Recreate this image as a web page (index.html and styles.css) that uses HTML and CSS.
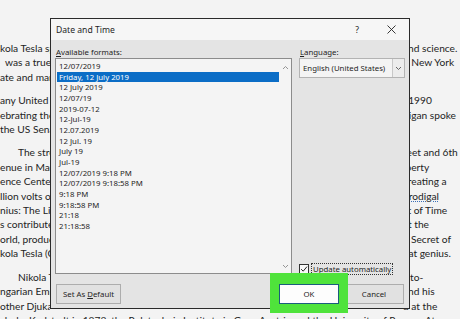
FILE: index.html
```html
<!DOCTYPE html>
<html lang="en">
<head>
  <meta charset="UTF-8">
  <meta name="viewport" content="width=device-width, initial-scale=1.0">
  <title>Date and Time</title>
  <link rel="stylesheet" href="styles.css">
</head>
<body>
  <div class="document">
    <div class="para">
      <div class="line"><span class="l">kola Tesla spent</span><span class="r">and science.</span></div>
      <div class="line"><span class="l">&nbsp;&nbsp;was a true</span><span class="r">n New York</span></div>
      <div class="line"><span class="l">ate and manu</span><span class="r"></span></div>
    </div>
    <div class="para">
      <div class="line"><span class="l">any United St</span><span class="r">&nbsp;&nbsp;1990</span></div>
      <div class="line"><span class="l">ebrating the</span><span class="r">higan spoke</span></div>
      <div class="line"><span class="l">the US Senate</span><span class="r"></span></div>
    </div>
    <div class="para">
      <div class="line"><span class="l indent">The street</span><span class="r">reet and 6th</span></div>
      <div class="line"><span class="l">enue in Man</span><span class="r">iberty</span></div>
      <div class="line"><span class="l">ence Center</span><span class="r">creating a</span></div>
      <div class="line"><span class="l">llion volts of</span><span class="r"><span class="squiggle">prodigal</span></span></div>
      <div class="line"><span class="l">nius: The Life</span><span class="r">st of Time</span></div>
      <div class="line"><span class="l">s contributed</span><span class="r">at the</span></div>
      <div class="line"><span class="l">orld, producing</span><span class="r">e Secret of</span></div>
      <div class="line"><span class="l">kola Tesla (C</span><span class="r">eat genius.</span></div>
    </div>
    <div class="para">
      <div class="line"><span class="l indent">Nikola Tesla</span><span class="r">s to-</span></div>
      <div class="line"><span class="l">ngarian Empire</span><span class="r">and his</span></div>
      <div class="line"><span class="l">other Djuka</span><span class="r">d at the</span></div>
      <div class="line">chule, Karlstadt in 1873, the Polytechnic Institute in Graz, Austria and the University of Prague. At</div>
    </div>
  </div>

  <div class="dialog">
    <div class="dialog-title">
      <span>Date and Time</span>
      <div class="title-buttons">
        <span class="help">?</span>
        <svg class="close" width="9" height="9" viewBox="0 0 9 9"><path d="M0.5 0.5 L8.5 8.5 M8.5 0.5 L0.5 8.5" stroke="#222" stroke-width="0.9"/></svg>
      </div>
    </div>
    <div class="dialog-body">
      <div class="dialog-main">
        <div class="formats">
          <div class="label"><u>A</u>vailable formats:</div>
          <div class="listbox">
            <ul class="items">
              <li>12/07/2019</li>
              <li class="selected">Friday, 12 July 2019</li>
              <li>12 July 2019</li>
              <li>12/07/19</li>
              <li>2019-07-12</li>
              <li>12-Jul-19</li>
              <li>12.07.2019</li>
              <li>12 Jul. 19</li>
              <li>July 19</li>
              <li>Jul-19</li>
              <li>12/07/2019 9:18 PM</li>
              <li>12/07/2019 9:18:58 PM</li>
              <li>9:18 PM</li>
              <li>9:18:58 PM</li>
              <li>21:18</li>
              <li>21:18:58</li>
            </ul>
            <div class="scrollbar">
              <svg width="7" height="5" viewBox="0 0 7 5"><polyline points="1,4 3.5,1.5 6,4" fill="none" stroke="#8a8a8a" stroke-width="0.9"/></svg>
              <svg width="7" height="5" viewBox="0 0 7 5"><polyline points="1,1 3.5,3.5 6,1" fill="none" stroke="#8a8a8a" stroke-width="0.9"/></svg>
            </div>
          </div>
        </div>
        <div class="side">
          <div class="label"><u>L</u>anguage:</div>
          <div class="select">
            <span class="select-value">English (United States)</span>
            <span class="select-arrow">
              <svg width="7" height="5" viewBox="0 0 7 5"><polyline points="1,1 3.5,3.5 6,1" fill="none" stroke="#555" stroke-width="0.9"/></svg>
            </span>
          </div>
          <div class="check">
            <span class="box">
              <svg width="8" height="8" viewBox="0 0 8 8"><polyline points="1.2,4.2 3.2,6.2 7,1.6" fill="none" stroke="#222" stroke-width="1"/></svg>
            </span>
            <span class="focus"><u>U</u>pdate automatically</span>
          </div>
        </div>
      </div>
      <div class="dialog-footer">
        <button class="btn btn-default">Set As <u>D</u>efault</button>
        <div class="actions">
          <span class="highlight"><button class="btn btn-ok">OK</button></span>
          <button class="btn">Cancel</button>
        </div>
      </div>
    </div>
  </div>
</body>
</html>
```

FILE: styles.css
```css
body {
  margin: 0;
  width: 460px;
  height: 319px;
  overflow: hidden;
  background-color: #f3f3f3;
  font-family: Lato, "Liberation Sans", sans-serif;
  color: #232323;
}

/* word document behind the dialog */
.document {
  padding-top: 41px;
  font-size: 10.2px;
  line-height: 14.4px;
}
.para {
  margin-bottom: 9px;
}
.line {
  display: flex;
  white-space: nowrap;
}
.line .l {
  flex: none;
  width: 50px;
  margin-right: 353px;
  overflow: hidden;
}
.line .indent {
  padding-left: 18px;
  box-sizing: border-box;
}
.squiggle {
  text-decoration: underline dotted #3d6fb6;
}

/* dialog */
.dialog {
  position: absolute;
  left: 50px;
  top: 18px;
  width: 358px;
  height: 289px;
  border: 1px solid #2a2a2a;
  background-color: #e4e4e4;
  display: flex;
  flex-direction: column;
  font-family: "Noto Sans", sans-serif;
  font-size: 7.8px;
  color: #1e1e1e;
}
.dialog-title {
  height: 21px;
  flex: none;
  background-color: #f6f6f6;
  display: flex;
  align-items: center;
  justify-content: space-between;
  padding: 0 13px 0 5px;
  font-size: 8.6px;
}
.title-buttons {
  display: flex;
  align-items: center;
  gap: 28px;
}
.help {
  font-size: 8.6px;
}
.dialog-body {
  flex: 1;
  display: flex;
  flex-direction: column;
  padding: 6px 4px 4px 4px;
}
.dialog-main {
  flex: 1;
  display: grid;
  grid-template-columns: 237px 1fr;
  column-gap: 7px;
}
.label {
  height: 12px;
  line-height: 12px;
  padding-left: 1px;
}
.label u {
  text-underline-offset: 1px;
}
.formats {
  display: flex;
  flex-direction: column;
}
.listbox {
  flex: 1;
  display: flex;
  border: 1px solid #8c8c8c;
  background-color: #f4f4f4;
}
.items {
  flex: 1;
  list-style: none;
  margin: 0;
  padding: 2px 0 0 1px;
}
.items li {
  height: 10.67px;
  line-height: 10.67px;
  padding-left: 2px;
}
.items li.selected {
  background-color: #0b6dc6;
  color: white;
}
.scrollbar {
  width: 12px;
  display: flex;
  flex-direction: column;
  justify-content: space-between;
  align-items: center;
  padding: 6px 0 4px;
}
.side {
  display: flex;
  flex-direction: column;
}
.select {
  height: 18px;
  display: flex;
  border: 1px solid #b3b3b3;
  background-color: #f4f4f4;
}
.select-value {
  flex: 1;
  padding-left: 3px;
  line-height: 18px;
}
.select-arrow {
  width: 11px;
  border-left: 1px solid #c8c8c8;
  display: flex;
  align-items: center;
  justify-content: center;
  background-color: #ececec;
}
.check {
  margin-top: auto;
  display: flex;
  align-items: center;
  gap: 2px;
  margin-bottom: -1px;
}
.check .box {
  width: 8px;
  height: 8px;
  border: 1px solid #333;
  background-color: #f8f8f8;
  display: flex;
}
.check .focus {
  border: 1px dotted #333;
  line-height: 10px;
  padding: 0 1px;
}

.dialog-footer {
  margin-top: 10px;
  display: flex;
  justify-content: space-between;
  align-items: center;
}
.btn {
  height: 20px;
  width: 60px;
  padding: 0;
  font-family: "Noto Sans", sans-serif;
  font-size: 7.8px;
  color: #1e1e1e;
  background-color: #e1e1e1;
  border: 1px solid #adadad;
}
.btn-default {
  width: 65px;
  margin-left: 1px;
}
.actions {
  display: flex;
  align-items: center;
  gap: 5px;
  margin-right: 1px;
}
.highlight {
  position: relative;
  display: flex;
  background-color: #4fe33b;
  padding: 11px 9px 9px;
  margin: -11px -9px -9px;
}
.btn-ok {
  background-color: #fdfdfd;
  border: 1px solid #1b5c7c;
}
```
